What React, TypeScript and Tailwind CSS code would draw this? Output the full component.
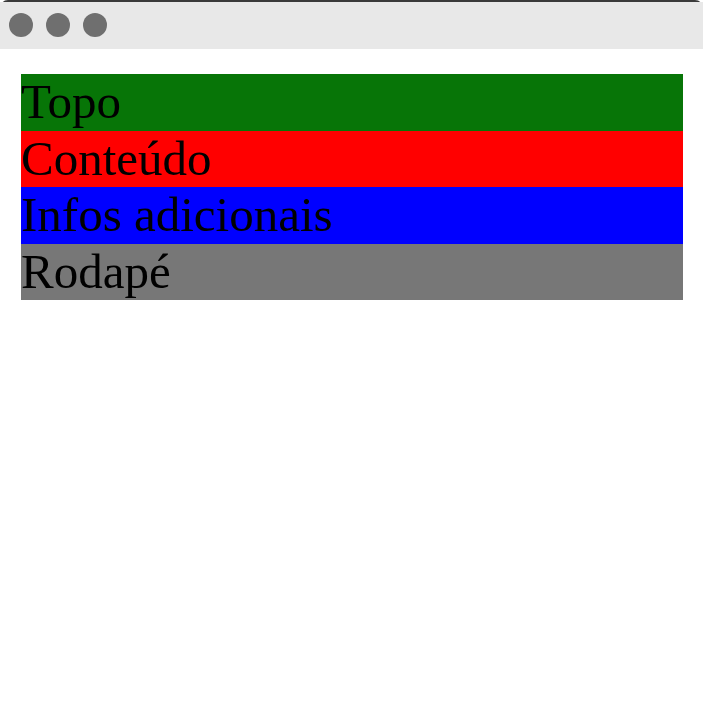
import React from 'react';

const App = () => {
  const sections = [
    { label: "Topo", color: "bg-[#077507]" },
    { label: "Conteúdo", color: "bg-[#ff0000]" },
    { label: "Infos adicionais", color: "bg-[#0000ff]" },
    { label: "Rodapé", color: "bg-[#777777]" },
  ];

  return (
    <div className="w-[703px] h-[708px] bg-white overflow-hidden">
      <div className="h-full rounded-t-[8px] border-t-2 border-[#3a3a3a] flex flex-col">
        <div className="h-[47px] bg-[#e8e8e8] flex items-center gap-[13px] pl-[9px] pb-[2px]">
          <span className="w-[24px] h-[24px] rounded-full bg-[#6f6f6f]" />
          <span className="w-[24px] h-[24px] rounded-full bg-[#6f6f6f]" />
          <span className="w-[24px] h-[24px] rounded-full bg-[#6f6f6f]" />
        </div>
        <div className="pt-[25px] pl-[21px] pr-[20px]">
          {sections.map((s, i) => (
            <div
              key={i}
              className={`${s.color} h-[56.5px] text-[49px] leading-[56.5px] text-black font-['Liberation_Serif',serif]`}
            >
              {s.label}
            </div>
          ))}
        </div>
      </div>
    </div>
  );
};

export default App;
